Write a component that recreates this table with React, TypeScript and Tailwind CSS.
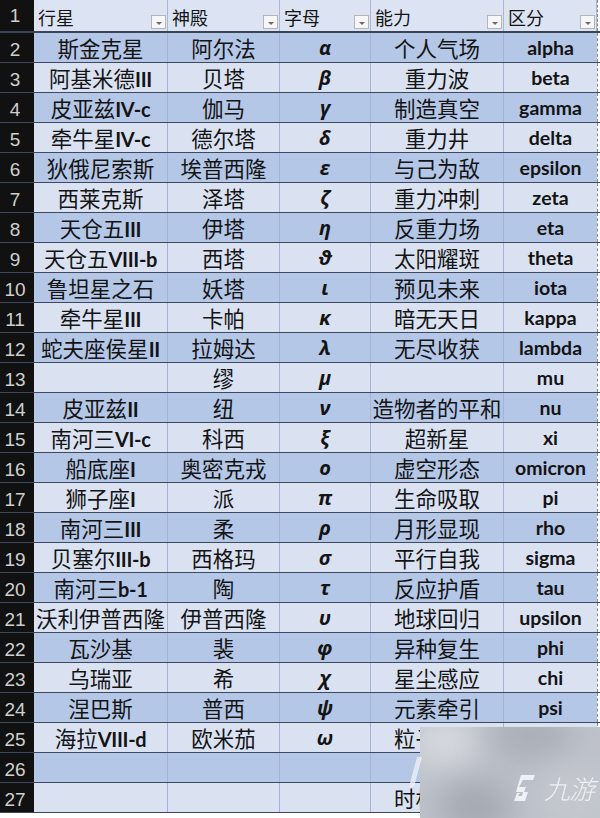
import React from "react";

const rows: [string, string, string, string, string][] = [
  ["斯金克星", "阿尔法", "α", "个人气场", "alpha"],
  ["阿基米德III", "贝塔", "β", "重力波", "beta"],
  ["皮亚兹IV-c", "伽马", "γ", "制造真空", "gamma"],
  ["牵牛星IV-c", "德尔塔", "δ", "重力井", "delta"],
  ["狄俄尼索斯", "埃普西隆", "ε", "与己为敌", "epsilon"],
  ["西莱克斯", "泽塔", "ζ", "重力冲刺", "zeta"],
  ["天仓五III", "伊塔", "η", "反重力场", "eta"],
  ["天仓五VIII-b", "西塔", "ϑ", "太阳耀斑", "theta"],
  ["鲁坦星之石", "妖塔", "ι", "预见未来", "iota"],
  ["牵牛星III", "卡帕", "κ", "暗无天日", "kappa"],
  ["蛇夫座侯星II", "拉姆达", "λ", "无尽收获", "lambda"],
  ["", "缪", "μ", "", "mu"],
  ["皮亚兹II", "纽", "ν", "造物者的平和", "nu"],
  ["南河三VI-c", "科西", "ξ", "超新星", "xi"],
  ["船底座I", "奥密克戎", "ο", "虚空形态", "omicron"],
  ["狮子座I", "派", "π", "生命吸取", "pi"],
  ["南河三III", "柔", "ρ", "月形显现", "rho"],
  ["贝塞尔III-b", "西格玛", "σ", "平行自我", "sigma"],
  ["南河三b-1", "陶", "τ", "反应护盾", "tau"],
  ["沃利伊普西隆", "伊普西隆", "υ", "地球回归", "upsilon"],
  ["瓦沙基", "裴", "φ", "异种复生", "phi"],
  ["乌瑞亚", "希", "χ", "星尘感应", "chi"],
  ["涅巴斯", "普西", "ψ", "元素牵引", "psi"],
  ["海拉VIII-d", "欧米茄", "ω", "粒子冲击", "omega"],
  ["", "", "", "", ""],
  ["", "", "", "时相转换", ""],
];

const grid = "grid grid-cols-[34px_134px_112px_91px_133px_93px_3px]";

function Mixed({ text }: { text: string }) {
  const parts = text.split(/([A-Za-z0-9\-]+)/).filter((p) => p !== "");
  return (
    <span className="whitespace-nowrap">
      {parts.map((p, i) =>
        /^[A-Za-z0-9\-]+$/.test(p) ? (
          <span key={i} className="font-['Lato',sans-serif] font-bold text-[20px] tracking-[-0.3px]">
            {p}
          </span>
        ) : (
          <span key={i}>{p}</span>
        )
      )}
    </span>
  );
}

function Drop() {
  return (
    <div className="absolute right-[1px] bottom-[2px] w-[15px] h-[14px] bg-[#f6f6f6] border border-[#b5b5b5] flex items-center justify-center">
      <div className="w-0 h-0 border-l-[3px] border-r-[3px] border-t-[3px] border-l-transparent border-r-transparent border-t-[#6a6a6a] mt-[2px]" />
    </div>
  );
}

export default function App() {
  const cjk = "font-['Noto_Sans_CJK_SC',sans-serif]";
  const headers = ["行星", "神殿", "字母", "能力", "区分"];
  return (
    <div className={`w-[600px] h-[818px] bg-white relative overflow-hidden ${cjk} text-[#141414]`}>
      {/* header row */}
      <div className={`${grid} h-[33px] border-b-2 border-[#3a4458]`}>
        <div className="bg-[#111] flex items-end justify-center pr-[4px] pb-[1px] font-['Liberation_Sans',sans-serif] text-[19px] text-[#cfcfcf]">
          1
        </div>
        {headers.map((h) => (
          <div key={h} className="relative bg-[#dce4f3] border-r border-[#a9b8d4] pl-[4px] pt-[5px] text-[18px] leading-[24px]">
            {h}
            <Drop />
          </div>
        ))}
        <div className="bg-white border-l border-dashed border-[#888]" />
      </div>
      {rows.map((r, idx) => {
        const n = idx + 2;
        const bg = n % 2 === 0 ? "bg-[#b5c7e7]" : "bg-[#dae2f2]";
        return (
          <div key={n} className={`${grid} h-[30px] border-b border-[#3e4960]`}>
            <div className="bg-[#111] flex items-end justify-center pr-[4px] pb-[0px] font-['Liberation_Sans',sans-serif] text-[19px] leading-[24px] text-[#cfcfcf]">
              {n}
            </div>
            <div className={`${bg} border-r border-[#a3b4d2] flex items-center justify-center text-[21.5px] leading-none`}>
              <Mixed text={r[0]} />
            </div>
            <div className={`${bg} border-r border-[#a3b4d2] flex items-center justify-center text-[21.5px] leading-none`}>
              {r[1]}
            </div>
            <div className={`${bg} border-r border-[#a3b4d2] flex items-center justify-center font-['Open_Sans',sans-serif] font-bold italic text-[20px] leading-none`}>
              {r[2]}
            </div>
            <div className={`${bg} border-r border-[#a3b4d2] flex items-center justify-center text-[21.5px] leading-none`}>
              {r[3]}
            </div>
            <div className={`${bg} flex items-center justify-center font-['Lato',sans-serif] font-bold text-[19.5px] leading-none`}>
              {r[4]}
            </div>
            <div className="bg-white border-l border-dashed border-[#888]" />
          </div>
        );
      })}

      {/* watermark overlay */}
      <div className="absolute left-[420px] top-[727px] w-[180px] h-[91px] overflow-hidden bg-[#bec2ca] z-10">
        <div className="absolute left-[-10px] top-[-10px] w-[70px] h-[50px] rounded-full bg-[#d6d9de] blur-lg" />
        <div className="absolute left-[70px] top-[-15px] w-[80px] h-[45px] rounded-full bg-[#a8adb6] blur-lg" />
        <div className="absolute left-[20px] top-[55px] w-[70px] h-[50px] rounded-full bg-[#a2a7b0] blur-lg" />
        <div className="absolute left-[120px] top-[40px] w-[70px] h-[60px] rounded-full bg-[#c4c8ce] blur-lg" />
        <svg className="absolute left-[92px] top-[46px]" width="24" height="30" viewBox="0 0 24 30">
          <path
            d="M9 2 L23 2 L21 7 L11 7 L7 14 L14 14 L12 19 L16 19 L13 28 L2 28 L5 20 L8 20 L6 23 L10 23 L11 19 L4 19 Z"
            fill="#f4f5f7"
            opacity="0.92"
          />
        </svg>
        <div className="absolute left-[124px] top-[48px] text-[26px] leading-none italic font-['Noto_Sans_CJK_SC',sans-serif] font-light text-[#f4f5f7] tracking-[-1px] opacity-90">
          九游
        </div>
      </div>
      <div className="absolute left-[413px] top-[757px] w-[5px] h-[30px] bg-[#eef0f4] opacity-80 skew-x-[-15deg] z-10" />
    </div>
  );
}
